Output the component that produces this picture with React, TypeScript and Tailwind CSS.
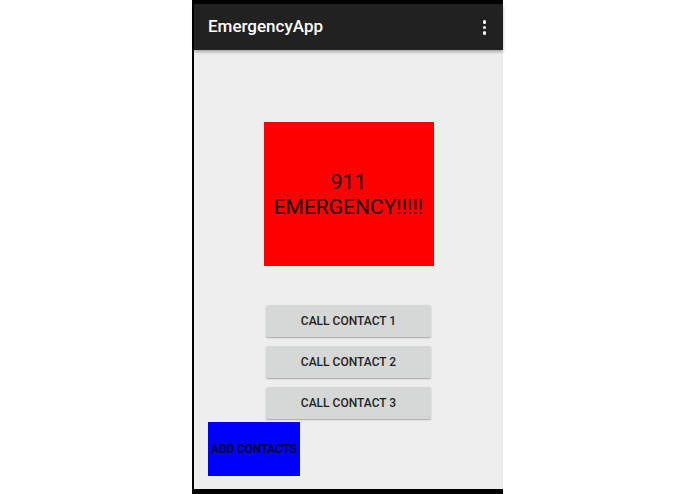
const roboto = "font-['Roboto','Liberation_Sans',sans-serif]";

function CallButton({ label }: { label: string }) {
  return (
    <button
      className={`h-[32px] w-[165px] rounded-[2px] bg-[#d6d7d7] text-[12px] font-medium text-[#1f1f1f] shadow-[0_1px_1.5px_rgba(0,0,0,0.3)] ${roboto}`}
    >
      {label}
    </button>
  );
}

export default function App() {
  return (
    <div className={`flex h-[494px] w-full bg-white pl-[192px] ${roboto}`}>
      <div className="flex h-full w-[311px] flex-col border-l-2 border-black bg-black pt-[4px] pb-[5px]">
        <header className="relative z-10 flex h-[46px] shrink-0 items-center justify-between bg-[#212121] pl-[14px] pr-[17px] shadow-[0_2px_3px_rgba(0,0,0,0.3)]">
          <h1 className="text-[17px] font-medium text-white">EmergencyApp</h1>
          <div className="flex flex-col gap-[2px] pt-[1px]">
            <span className="h-[3.5px] w-[3.5px] rounded-full bg-white" />
            <span className="h-[3.5px] w-[3.5px] rounded-full bg-white" />
            <span className="h-[3.5px] w-[3.5px] rounded-full bg-white" />
          </div>
        </header>

        <main className="flex flex-1 flex-col bg-[#eeeeee] pt-[72px]">
          <div className="mx-auto flex h-[144px] w-[170px] flex-col items-center justify-center pt-[2px] bg-[#ff0000] text-[21px] leading-[25px] text-[#1a0000]">
            <span>911</span>
            <span>EMERGENCY!!!!!</span>
          </div>

          <div className="mt-[39px] flex flex-col items-center gap-[9px]">
            <CallButton label="CALL CONTACT 1" />
            <CallButton label="CALL CONTACT 2" />
            <CallButton label="CALL CONTACT 3" />
          </div>

          <div className="ml-[14px] mt-[3px] flex h-[54px] w-[92px] items-center justify-center bg-[#0000ff]">
            <span className="whitespace-nowrap text-[12px] font-bold tracking-[-0.2px] text-[#000033]">ADD CONTACTS</span>
          </div>
        </main>
      </div>
    </div>
  );
}
